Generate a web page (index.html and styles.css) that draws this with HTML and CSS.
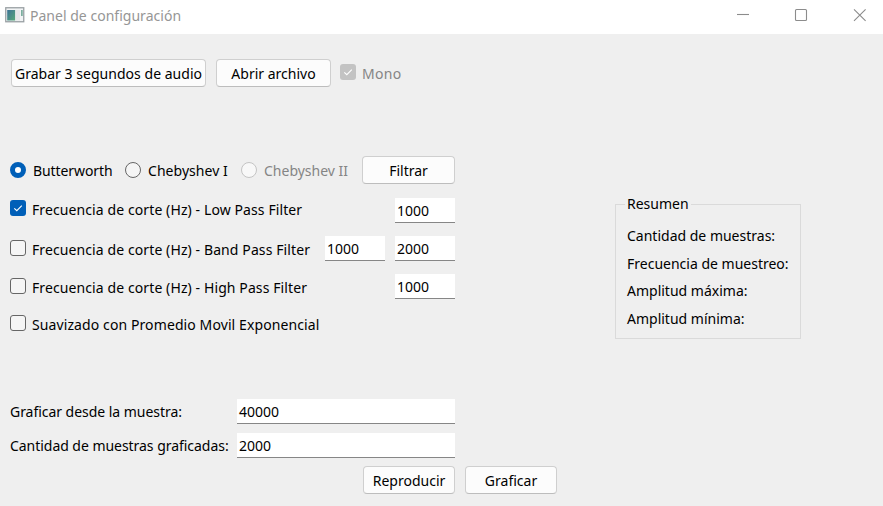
FILE: index.html
```html
<!DOCTYPE html>
<html lang="es">
<head>
<meta charset="utf-8">
<title>Panel de configuración</title>
<link rel="stylesheet" href="styles.css">
</head>
<body>
<header class="titlebar">
  <svg class="app-icon" width="20" height="16" viewBox="0 0 20 16">
    <defs><linearGradient id="g" x1="0" y1="0" x2="1" y2="1"><stop offset="0" stop-color="#3d7396"/><stop offset="1" stop-color="#55a878"/></linearGradient></defs>
    <rect x=".75" y=".75" width="18" height="14" fill="#f2f4f5" stroke="#9aa0a4" stroke-width="1.3"/>
    <rect x="2.2" y="3" width="8" height="10.5" fill="url(#g)"/>
    <rect x="10.7" y="3" width="4.3" height="10.5" fill="#e4e6e8"/>
    <rect x="16.2" y="3" width="1.4" height="6" fill="#5f9f8c"/>
  </svg>
  <span class="title">Panel de configuración</span>
  <svg class="controls" width="130" height="14" viewBox="0 0 130 14" fill="none" stroke="#8c8c8c" stroke-width="1.1">
    <path d="M0 6.5H12"/><rect x="58.5" y="1.5" width="11" height="11" rx="1"/><path d="M117 1.3 128.6 12.9M128.6 1.3 117 12.9"/>
  </svg>
</header>
<main class="panel">
  <div class="row audio">
    <button class="btn record"><span>Grabar 3 segundos de audio</span></button>
    <button class="btn open"><span>Abrir archivo</span></button>
    <label class="option mono"><span class="box disabled"><svg width="16" height="16" viewBox="0 0 16 16"><path d="M4.3 8.3 6.8 10.7 11.8 5.6"/></svg></span><span class="mono-text">Mono</span></label>
  </div>
  <div class="middle">
    <section class="filters">
      <div class="row types">
        <label class="option butter"><span class="radio selected"></span><span class="caption">Butterworth</span></label>
        <label class="option cheb"><span class="radio"></span><span class="caption">Chebyshev I</span></label>
        <label class="option cheb2"><span class="radio off"></span><span class="caption">Chebyshev II</span></label>
        <button class="btn filter"><span>Filtrar</span></button>
      </div>
      <div class="row low">
        <span class="box checked"><svg width="16" height="16" viewBox="0 0 16 16"><path d="M4.3 8.3 6.8 10.7 11.8 5.6"/></svg></span>
        <span class="name">Frecuencia de corte (Hz) - Low Pass Filter</span>
        <span class="field">1000</span>
      </div>
      <div class="row band">
        <span class="box"></span>
        <span class="name">Frecuencia de corte (Hz) - Band Pass Filter</span>
        <span class="field">1000</span>
        <span class="field">2000</span>
      </div>
      <div class="row high">
        <span class="box"></span>
        <span class="name">Frecuencia de corte (Hz) - High Pass Filter</span>
        <span class="field">1000</span>
      </div>
      <div class="row smooth">
        <span class="box"></span>
        <span class="name">Suavizado con Promedio Movil Exponencial</span>
      </div>
    </section>
    <fieldset class="summary">
      <legend>Resumen</legend>
      <p class="s1">Cantidad de muestras:</p>
      <p class="s2">Frecuencia de muestreo:</p>
      <p class="s3">Amplitud máxima:</p>
      <p class="s4">Amplitud mínima:</p>
    </fieldset>
  </div>
  <section class="plot">
    <span class="label">Graficar desde la muestra:</span><span class="field">40000</span>
    <span class="label">Cantidad de muestras graficadas:</span><span class="field">2000</span>
  </section>
  <div class="row actions">
    <button class="btn play"><span>Reproducir</span></button>
    <button class="btn draw"><span>Graficar</span></button>
  </div>
</main>
</body>
</html>
```
FILE: styles.css
```css
* { box-sizing: border-box; }
body {
  margin: 0;
  width: 883px;
  height: 506px;
  overflow: hidden;
  background: #efefef;
  color: #000;
  font: 14px/20px "Noto Sans", "Open Sans", sans-serif;
  white-space: nowrap;
}
.titlebar { display: flex; height: 34px; background: #fff; padding: 7px 16px 0 5px; }
.title { margin: -1px 0 0 5px; color: #969696; letter-spacing: 0.02px; }
.controls { margin: 1px 0 0 auto; }
.panel { padding: 25px 0 0 10px; }
.row { display: flex; align-items: center; }
.btn {
  height: 28px;
  padding: 2px 0 0;
  border: 1px solid #cfcfcf;
  border-bottom-color: #bdbdbd;
  border-radius: 4px;
  background: #fcfcfc;
  color: #000;
  font: inherit;
  white-space: nowrap;
  display: flex;
  justify-content: center;
  align-items: center;
}
.audio { height: 28px; padding-left: 1px; }
.record { width: 195px; letter-spacing: 0.03px; }
.open { width: 115px; margin-left: 10px; }
.option { display: flex; align-items: center; gap: 7px; }
.mono { margin-left: 9px; gap: 6px; color: #858585; letter-spacing: 0.3px; }
.mono .box { margin-top: -3px; }
.mono-text, .caption { padding-top: 2px; }
.box {
  flex: none;
  width: 16px;
  height: 16px;
  border: 1px solid #666;
  border-radius: 3px;
  background: #f5f5f5;
}
.box svg { display: block; fill: none; stroke: #fff; stroke-width: 1.1; }
.box.checked { border: 0; background: #005fb8; }
.box.disabled { border: 0; background: #c3c3c3; }
.radio { width: 16px; height: 16px; border: 1px solid #666; border-radius: 50%; background: #f5f5f5; }
.radio.selected { border: 5px solid #005fb8; background: #fff; }
.radio.off { border-color: #c4c4c4; background: #f8f8f8; }
.middle { display: flex; justify-content: space-between; padding-right: 82px; margin-top: 69px; height: 243px; }
.filters { width: 445px; }
.types { height: 28px; }
.butter { width: 115px; letter-spacing: -0.08px; }
.cheb { width: 116px; letter-spacing: 0.04px; }
.cheb2 { width: 121px; color: #858585; }
.filter { width: 93px; }
.name { margin: 3px auto 0 6px; letter-spacing: 0.1px; }
.field {
  width: 60px;
  height: 25px;
  padding: 3px 0 0 2px;
  background: #fff;
  border-bottom: 1px solid #868686;
}
.field + .field { margin-left: 10px; }
.low { margin-top: 14px; height: 25px; }
.low .box { margin-top: -5px; }
.low .name { margin-top: -1px; }
.band { margin-top: 13px; height: 25px; }
.high { margin-top: 13px; height: 25px; }
.high .box, .band .box { margin-top: -1px; }
.smooth { margin-top: 11px; height: 25px; }
.smooth .box { margin-top: 1px; }
.smooth .name { margin-top: 5px; }
.summary { margin: 38px 0 0; width: 186px; height: 145px; padding: 12px 0 0 11px; border: 1px solid #dadada; }
.summary legend { height: 20px; padding: 0 2px; margin-left: -2px; }
.summary p { margin: 0 0 7.6px; }
.plot { display: grid; grid-template-columns: 227px 218px; row-gap: 9px; align-items: center; }
.plot .label { letter-spacing: -0.04px; }
.plot .field { width: 218px; margin: 0; }
.actions { margin: 8px 0 0 353px; gap: 10px; }
.play, .draw { width: 92px; }
```
